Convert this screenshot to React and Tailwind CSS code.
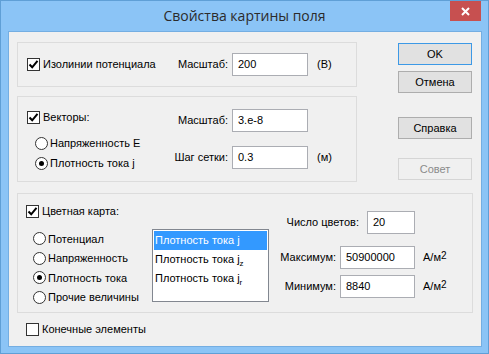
import React from 'react';

const font = { fontFamily: '"Liberation Sans", Arial, sans-serif' };

const Check = ({ checked }) => (
  <span className="w-[13px] h-[13px] border border-[#333] bg-white flex items-center justify-center shrink-0">
    {checked && (
      <svg width="11" height="11" viewBox="0 0 11 11">
        <path d="M1.5 5.5 L4.2 8.3 L9.5 1.8" fill="none" stroke="#000" strokeWidth="2" />
      </svg>
    )}
  </span>
);

const Radio = ({ checked }) => (
  <span className="w-[13px] h-[13px] rounded-full border border-[#333] bg-white flex items-center justify-center shrink-0">
    {checked && <span className="w-[5px] h-[5px] rounded-full bg-black" />}
  </span>
);

const CheckRow = ({ checked, label, className = '' }) => (
  <div className={`flex items-center h-[16px] gap-[3px] ${className}`}>
    <Check checked={checked} />
    <span>{label}</span>
  </div>
);

const RadioRow = ({ checked, label, className = '' }) => (
  <div className={`flex items-center gap-[2px] ${className}`}>
    <Radio checked={checked} />
    <span>{label}</span>
  </div>
);

const Field = ({ value, w }) => (
  <div className={`h-[23px] ${w} border border-[#abadb3] bg-white flex items-center pl-[5px] shrink-0`}>
    {value}
  </div>
);

const Btn = ({ children, primary, disabled }) => (
  <div
    className={`w-[74px] h-[22px] flex items-center justify-center border ${
      primary
        ? 'border-[#3c99e6] bg-[#e1e1e1]'
        : disabled
        ? 'border-[#d5d5d5] bg-[#f0f0f0] text-[#8b8b8b]'
        : 'border-[#adadad] bg-[#e1e1e1]'
    }`}
  >
    {children}
  </div>
);

// единица измерения А/м²
const Unit = () => (
  <span className="ml-[8px]">
    А/м<sup className="text-[10px] relative top-[-2px]">2</sup>
  </span>
);

const Sub = ({ c }) => <span className="text-[8px] relative top-[4px]">{c}</span>;

export default function App() {
  return (
    <div
      className="w-[489px] h-[354px] bg-[#8bc4f6] border border-[#5f9fd6] flex flex-col text-[11px] text-black"
      style={font}
    >
      <div className="h-[30px] relative flex items-center justify-center">
        <span className="text-[14px] text-[#2b2b2b] pb-[1px]" style={{ fontFamily: '"Open Sans", "Noto Sans", sans-serif' }}>
          Свойства картины поля
        </span>
        <div className="absolute right-[7px] top-0 w-[31px] h-[20px] bg-[#c75050] flex items-center justify-center">
          <svg width="9" height="9" viewBox="0 0 9 9">
            <path d="M1 1 L8 8 M8 1 L1 8" stroke="#fff" strokeWidth="2" />
          </svg>
        </div>
      </div>

      <div className="ml-[7px] mr-[6px] mb-[6px] flex-1 bg-[#f0f0f0] border border-[#74aee2] pl-[8px] pt-[10px] flex flex-col">
        <div className="flex">
          <div className="flex flex-col w-[340px]">
            {/* изолинии */}
            <div className="h-[45px] border border-[#dcdcdc] flex items-center pl-[9px]">
              <div className="w-[140px]">
                <CheckRow checked label="Изолинии потенциала" />
              </div>
              <div className="w-[61px] text-right">Масштаб:</div>
              <div className="ml-[4px]"><Field value="200" w="w-[76px]" /></div>
              <span className="ml-[9px]">(В)</span>
            </div>

            {/* векторы */}
            <div className="mt-[9px] h-[86px] border border-[#dcdcdc] flex pl-[9px]">
              <div className="w-[140px] pt-[12px]">
                <CheckRow checked label="Векторы:" />
                <div className="pl-[8px] mt-[8px]">
                  <RadioRow label="Напряженность Е" className="h-[20px]" />
                  <RadioRow checked label="Плотность тока j" className="h-[20px]" />
                </div>
              </div>
              <div className="pt-[12px] flex flex-col gap-[14px]">
                <div className="flex items-center">
                  <div className="w-[61px] text-right">Масштаб:</div>
                  <div className="ml-[4px]"><Field value="3.e-8" w="w-[76px]" /></div>
                </div>
                <div className="flex items-center">
                  <div className="w-[61px] text-right">Шаг сетки:</div>
                  <div className="ml-[4px]"><Field value="0.3" w="w-[76px]" /></div>
                  <span className="ml-[9px]">(м)</span>
                </div>
              </div>
            </div>
          </div>

          <div className="ml-[41px] pt-[1px] flex flex-col">
            <Btn primary>OK</Btn>
            <div className="mt-[6px]"><Btn>Отмена</Btn></div>
            <div className="mt-[24px]"><Btn>Справка</Btn></div>
            <div className="mt-[19px]"><Btn disabled>Совет</Btn></div>
          </div>
        </div>

        {/* цветная карта */}
        <div className="mt-[11px] w-[456px] h-[120px] border border-[#dcdcdc] flex">
          <div className="w-[251px] pl-[8px] pt-[9px] flex flex-col">
            <CheckRow checked label="Цветная карта:" />
            <div className="flex mt-[10px]">
              <div className="w-[126px] pl-[7px] flex flex-col">
                <RadioRow label="Потенциал" className="h-[19.5px]" />
                <RadioRow label="Напряженность" className="h-[19.5px]" />
                <RadioRow checked label="Плотность тока" className="h-[19.5px]" />
                <RadioRow label="Прочие величины" className="h-[19.5px]" />
              </div>
              <div className="w-[117px] h-[73px] border border-[#828790] bg-white p-[1px] flex flex-col">
                <div className="h-[19px] bg-[#3399ff] text-white flex items-center pl-[1px]">Плотность тока j</div>
                <div className="h-[19px] flex items-center pl-[1px]">Плотность тока j<Sub c="z" /></div>
                <div className="h-[19px] flex items-center pl-[1px]">Плотность тока j<Sub c="r" /></div>
              </div>
            </div>
          </div>
          <div className="pt-[17px] flex flex-col">
            <div className="flex items-center">
              <div className="w-[146px] flex justify-end items-center">
                <span className="mr-[8px]">Число цветов:</span>
                <Field value="20" w="w-[48px]" />
              </div>
            </div>
            <div className="flex items-center mt-[12px]">
              <div className="w-[146px] flex justify-end items-center">
                <span className="mr-[4px]">Максимум:</span>
                <Field value="50900000" w="w-[75px]" />
              </div>
              <Unit />
            </div>
            <div className="flex items-center mt-[6px]">
              <div className="w-[146px] flex justify-end items-center">
                <span className="mr-[4px]">Минимум:</span>
                <Field value="8840" w="w-[75px]" />
              </div>
              <Unit />
            </div>
          </div>
        </div>

        <CheckRow label="Конечные элементы" className="mt-[8px] pl-[9px]" />
      </div>
    </div>
  );
}
